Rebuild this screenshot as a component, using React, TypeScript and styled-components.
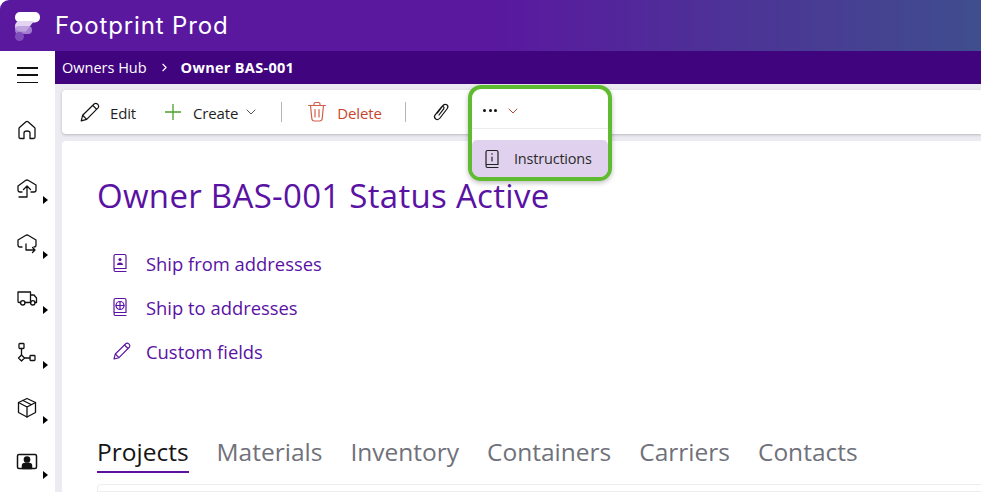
import React from "react";
import styled, { createGlobalStyle } from "styled-components";
import { ChevronDown, ChevronRight } from "lucide-react";

const GlobalStyle = createGlobalStyle`
  html, body {
    margin: 0;
    padding: 0;
    height: 100%;
    overflow: hidden;
    background: #fff;
    font-family: "Open Sans", "Noto Sans", sans-serif;
  }
`;

const Page = styled.div`
  width: 981px;
  height: 492px;
  display: flex;
  flex-direction: column;
  overflow: hidden;
`;

const Header = styled.header`
  height: 51px;
  flex: 0 0 51px;
  display: flex;
  align-items: center;
  padding-left: 14px;
  gap: 15px;
  color: #fff;
  border-top-left-radius: 9px;
  background: linear-gradient(90deg, #5a189f 0%, #5a189f 50%, #3f4e8e 100%);
`;

const AppName = styled.div`
  font-family: "Inter", sans-serif;
  font-size: 24px;
  letter-spacing: 0.85px;
  font-weight: 400;
`;

const Body = styled.div`
  flex: 1;
  display: flex;
  min-height: 0;
`;

const Sidebar = styled.nav`
  width: 55px;
  flex: 0 0 55px;
  display: flex;
  flex-direction: column;
  align-items: center;
  background: #fff;
  overflow: hidden;
`;

const Burger = styled.div`
  width: 21px;
  height: 16px;
  flex: 0 0 16px;
  margin: 16px 0 36px;
  display: flex;
  flex-direction: column;
  justify-content: space-between;
  span {
    height: 1.5px;
    background: #111;
  }
`;

const NavItem = styled.div<{ $drop: number }>`
  position: relative;
  width: 55px;
  height: 55px;
  flex: 0 0 55px;
  box-sizing: border-box;
  padding-top: ${(p) => p.$drop}px;
  display: flex;
  justify-content: center;
  svg.nav {
    margin-left: -1px;
  }
`;

const Caret = styled.span`
  position: absolute;
  left: 43px;
  top: 22px;
  width: 0;
  height: 0;
  border-left: 5px solid #000;
  border-top: 4px solid transparent;
  border-bottom: 4px solid transparent;
`;

const Content = styled.div`
  flex: 1;
  min-width: 0;
  display: flex;
  flex-direction: column;
  background: #ecebf1;
`;

const Breadcrumbs = styled.div`
  height: 33px;
  flex: 0 0 33px;
  background: #40047f;
  color: #fff;
  display: flex;
  align-items: center;
  padding-left: 7px;
  font-size: 14.5px;
`;

const CrumbCurrent = styled.span`
  font-weight: 700;
  margin-left: 10px;
  letter-spacing: 0.3px;
`;

const CrumbSep = styled.span`
  display: flex;
  margin-left: 11px;
`;

const Toolbar = styled.div`
  position: relative;
  z-index: 1;
  height: 44px;
  margin: 6px 0 0 7px;
  background: #fff;
  border-radius: 4px 0 0 4px;
  box-shadow: 0 1px 3px rgba(0, 0, 0, 0.22);
  display: flex;
  align-items: center;
  padding-left: 17px;
`;

const ToolButton = styled.div<{ $danger?: boolean; $gap?: number; $offset?: number }>`
  display: flex;
  align-items: center;
  gap: ${(p) => p.$gap ?? 9}px;
  margin-left: ${(p) => p.$offset ?? 0}px;
  font-size: 15px;
  letter-spacing: -0.15px;
  color: ${(p) => (p.$danger ? "#c8442f" : "#1f1f1f")};
`;

const ToolLabel = styled.span`
  position: relative;
  top: 1px;
`;

const CreateChevron = styled(ChevronDown)`
  margin-left: -7px;
`;

const Divider = styled.span<{ $left: number; $right: number }>`
  width: 1px;
  height: 20px;
  background: #b5b5b5;
  margin: 0 ${(p) => p.$right}px 0 ${(p) => p.$left}px;
`;

const MorePopover = styled.div`
  position: absolute;
  left: 406px;
  top: -5px;
  width: 144px;
  height: 96px;
  box-sizing: border-box;
  background: #fff;
  border: 4px solid #5fbb2f;
  border-radius: 13px;
  box-shadow: 0 2px 5px rgba(0, 0, 0, 0.25);
  display: flex;
  flex-direction: column;
`;

const MoreRow = styled.div`
  height: 40px;
  flex: 0 0 40px;
  box-sizing: border-box;
  padding: 4px 0 0 11px;
  display: flex;
  align-items: center;
  gap: 8px;
  border-bottom: 1px solid #ececec;
`;

const Dots = styled.span`
  display: flex;
  gap: 2.5px;
  i {
    width: 3px;
    height: 3px;
    border-radius: 50%;
    background: #111;
  }
`;

const MenuItem = styled.div`
  flex: 1;
  margin-top: 11px;
  border-radius: 5px 5px 8px 8px;
  background: #e0d2ee;
  display: flex;
  align-items: center;
  gap: 14px;
  padding-left: 12px;
  font-size: 14.5px;
  letter-spacing: -0.2px;
  color: #2b2b2b;
`;

const MainCard = styled.main`
  flex: 1;
  margin: 7px 0 0 7px;
  background: #fff;
  border-radius: 4px 0 0 0;
  padding: 34px 0 0 35px;
  display: flex;
  flex-direction: column;
  min-height: 0;
`;

const Title = styled.h1`
  margin: 0;
  font-size: 33px;
  line-height: 42px;
  font-weight: 400;
  letter-spacing: 0.3px;
  color: #5a12a3;
`;

const Links = styled.div`
  margin-top: 31px;
  display: flex;
  flex-direction: column;
  gap: 14px;
  padding-left: 15px;
`;

const LinkRow = styled.a`
  display: flex;
  align-items: center;
  height: 30px;
  gap: 14px;
  font-size: 18.4px;
  color: #5a12a3;
`;

const IconSlot = styled.span`
  flex: 0 0 20px;
  display: flex;
`;

const Tabs = styled.div`
  margin-top: 69px;
  display: flex;
  gap: 28px;
`;

const Tab = styled.div<{ $active?: boolean }>`
  height: 38px;
  box-sizing: border-box;
  font-size: 24.5px;
  line-height: 33px;
  color: ${(p) => (p.$active ? "#151515" : "#70717a")};
  border-bottom: ${(p) => (p.$active ? "2px solid #5a12a3" : "2px solid transparent")};
`;

const TabPanel = styled.div`
  margin-top: 11px;
  height: 30px;
  border: 1px solid #eeeeee;
  border-right: 0;
  border-radius: 4px 0 0 0;
`;

const Logo = () => (
  <svg width="26" height="30" viewBox="0 0 26 30">
    <rect x="1" y="1" width="25" height="10.5" rx="5" fill="#fff" />
    <path d="M1 15 a5 5 0 0 1 5-5 h14 L12 20.5 H6 a5 5 0 0 1-5-5z" fill="#e3d4f2" />
    <path d="M1 15 L8 20 H6 a5 5 0 0 1-5-5z" fill="#cbb2e6" />
    <rect x="1" y="15" width="17" height="8" rx="4" fill="#b597db" opacity="0.8" />
    <circle cx="5.5" cy="25.5" r="4.5" fill="#7f4dba" />
  </svg>
);

const icon = {
  width: 22,
  height: 22,
  viewBox: "0 0 22 22",
  fill: "none",
  stroke: "#111",
  strokeWidth: 1.3,
  strokeLinecap: "round" as const,
  strokeLinejoin: "round" as const,
  className: "nav",
};

const navIcons = [
  <svg {...icon}>
    <path d="M3 18 V9.500 Q3 9 3.500 8.500 L10 2.800 Q11 2 12 2.800 L18.500 8.500 Q19 9 19 9.500 V18 Q19 19.500 17.500 19.500 H14 V14 Q14 12 11 12 Q8 12 8 14 V19.500 H4.500 Q3 19.500 3 18 Z" />
  </svg>,
  <svg {...icon}>
    <path d="M6 15 H4 Q2 15 2 13 V9 L9.500 3.500 Q11 2.500 12.500 3.500 L20 8 V13 Q20 15 18 15 H15" />
    <path d="M11 20 V9 M7.500 12.500 L11 9 L14.500 12.500 M3 20 H11" />
  </svg>,
  <svg {...icon}>
    <path d="M6 15 H4 Q2 15 2 13 V8 L9.500 3.500 Q11 2.500 12.500 3.500 L20 8 V13 Q20 15 18 15" />
    <path d="M10 12 V18 H19 M16.500 15.500 L19 18 L16.500 20.500" />
  </svg>,
  <svg {...icon}>
    <path d="M4.500 15.500 H3 Q2 15.500 2 14.500 V5 H14.500 V15.500 H9 M14.500 8 H18 L20.500 11 V15.500 H19 M14.500 15.500 H14.800" />
    <circle cx="6.800" cy="15.800" r="2.200" />
    <circle cx="16.800" cy="15.800" r="2.200" />
  </svg>,
  <svg {...icon}>
    <rect x="3" y="1.500" width="5" height="5" rx="0.8" />
    <path d="M5.500 6.500 V13" />
    <path d="M5.500 13 L8.500 16 L5.500 19 L2.500 16 Z" />
    <path d="M8.500 16 H14" />
    <rect x="14" y="13.500" width="5" height="5" rx="0.8" />
  </svg>,
  <svg {...icon}>
    <path d="M11 1.500 L19.500 5.500 V15.500 L11 20 L2.500 15.500 V5.500 Z" />
    <path d="M2.500 5.500 L11 10 L19.500 5.500 M11 10 V20 M7 3.500 L15 7.500" />
  </svg>,
  <svg {...icon} strokeWidth={1.5}>
    <rect x="1.500" y="2.500" width="19" height="14" rx="1.500" />
    <circle cx="11" cy="7.500" r="2.600" fill="#111" />
    <path d="M6.500 16.500 V14 Q6.500 11.500 9 11.500 H13 Q15.500 11.500 15.500 14 V16.500 Z" fill="#111" />
  </svg>,
];

const Pencil = ({ color, size = 22 }: { color: string; size?: number }) => (
  <svg width={size} height={size} viewBox="0 0 20 20" fill="none" stroke={color} strokeWidth="1.1" strokeLinejoin="round">
    <path d="M2 18 L3.300 13 L14 2.500 Q15.300 1.500 16.800 2.800 L17.300 3.300 Q18.500 4.700 17.500 6 L7 16.700 Z" />
    <path d="M12.500 4 L16 7.500 M3.300 13 L7 16.700" />
  </svg>
);

const GreenPlus = () => (
  <svg width="16" height="16" viewBox="0 0 16 16" fill="none" stroke="#4aa02c" strokeWidth="1.3">
    <path d="M0 8 H16 M8 0 V16" />
  </svg>
);

const Trash = () => (
  <svg width="20" height="22" viewBox="0 0 20 22" fill="none" stroke="#d2604a" strokeWidth="1.2" strokeLinecap="round">
    <path d="M1.500 4.500 H18.500 M7 4.500 V3 Q7 1.500 8.500 1.500 H11.500 Q13 1.500 13 3 V4.500" />
    <path d="M3.500 4.500 L4.800 17.500 Q5 20 7.500 20 H12.500 Q15 20 15.200 17.500 L16.500 4.500" />
    <path d="M8 8.500 V16 M12 8.500 V16" />
  </svg>
);

const Clip = () => (
  <svg width="18" height="20" viewBox="0 0 18 20" fill="none" stroke="#111" strokeWidth="1.2" strokeLinecap="round">
    <path d="M5.500 11 L11 3.500 Q12.800 1.500 14.800 2.800 Q16.800 4.300 15.300 6.500 L8 16 Q6 18.500 3.800 17 Q1.500 15.200 3 13 L9.500 5 Q10.500 4 11.500 4.800 Q12.500 5.700 11.700 6.800 L7 13" />
  </svg>
);

const BookBase = ({ color, children }: { color: string; children: React.ReactNode }) => (
  <svg width="16" height="20" viewBox="0 0 16 20" fill="none" stroke={color} strokeWidth="1.2" strokeLinecap="round">
    <path d="M2 15.500 V3 Q2 1.500 3.500 1.500 H12.500 Q14 1.500 14 3 V15.500 H3.500 Q2 15.500 2 17 Q2 18.500 3.500 18.500 H14" />
    {children}
  </svg>
);

const links = [
  {
    label: "Ship from addresses",
    icon: (
      <BookBase color="#5a12a3">
        <circle cx="8" cy="6.500" r="1.600" fill="#5a12a3" stroke="none" />
        <path d="M5 12 Q5 9.500 8 9.500 Q11 9.500 11 12 Z" fill="#5a12a3" stroke="none" />
      </BookBase>
    ),
  },
  {
    label: "Ship to addresses",
    icon: (
      <BookBase color="#5a12a3">
        <circle cx="8" cy="8.500" r="4" />
        <path d="M4 8.500 H12 M8 4.500 V12.500" />
      </BookBase>
    ),
  },
  { label: "Custom fields", icon: <Pencil color="#5a12a3" size={20} /> },
];

const tabs = ["Projects", "Materials", "Inventory", "Containers", "Carriers", "Contacts"];

export default function App() {
  return (
    <Page>
      <GlobalStyle />
      <Header>
        <Logo />
        <AppName>Footprint Prod</AppName>
      </Header>
      <Body>
        <Sidebar>
          <Burger aria-label="Menu">
            <span />
            <span />
            <span />
          </Burger>
          {navIcons.map((svg, i) => (
            <NavItem key={i} $drop={i > 0 ? 3 : 0}>
              {svg}
              {i > 0 && <Caret />}
            </NavItem>
          ))}
        </Sidebar>
        <Content>
          <Breadcrumbs>
            <span>Owners Hub</span>
            <CrumbSep>
              <ChevronRight size={13} color="#fff" />
            </CrumbSep>
            <CrumbCurrent>Owner BAS-001</CrumbCurrent>
          </Breadcrumbs>
          <Toolbar>
            <ToolButton>
              <Pencil color="#111" />
              <ToolLabel>Edit</ToolLabel>
            </ToolButton>
            <ToolButton $offset={29} $gap={12}>
              <GreenPlus />
              <ToolLabel>Create</ToolLabel>
              <CreateChevron size={16} color="#444" strokeWidth={1.4} />
            </ToolButton>
            <Divider $left={22} $right={25} />
            <ToolButton $danger $gap={10}>
              <Trash />
              <ToolLabel>Delete</ToolLabel>
            </ToolButton>
            <Divider $left={23} $right={26} />
            <Clip />
            <MorePopover>
              <MoreRow>
                <Dots>
                  <i />
                  <i />
                  <i />
                </Dots>
                <ChevronDown size={16} color="#b03a2e" strokeWidth={1.4} />
              </MoreRow>
              <MenuItem>
                <BookBase color="#222">
                  <circle cx="8" cy="5" r="0.8" fill="#222" stroke="none" />
                  <path d="M8 8 V12" />
                </BookBase>
                Instructions
              </MenuItem>
            </MorePopover>
          </Toolbar>
          <MainCard>
            <Title>Owner BAS-001 Status Active</Title>
            <Links>
              {links.map((l) => (
                <LinkRow key={l.label}>
                  <IconSlot>{l.icon}</IconSlot>
                  {l.label}
                </LinkRow>
              ))}
            </Links>
            <Tabs>
              {tabs.map((t, i) => (
                <Tab key={t} $active={i === 0}>
                  {t}
                </Tab>
              ))}
            </Tabs>
            <TabPanel />
          </MainCard>
        </Content>
      </Body>
    </Page>
  );
}
